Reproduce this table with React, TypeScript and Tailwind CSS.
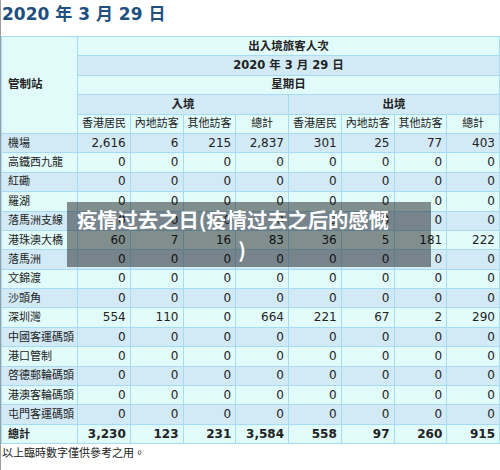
const cyan = "bg-[#e1fbfa]";
const blue = "bg-[#d2e9f6]";

type Row = { name: string; values: string[] };

const rows: Row[] = [
  { name: "機場", values: ["2,616", "6", "215", "2,837", "301", "25", "77", "403"] },
  { name: "高鐵西九龍", values: ["0", "0", "0", "0", "0", "0", "0", "0"] },
  { name: "紅磡", values: ["0", "0", "0", "0", "0", "0", "0", "0"] },
  { name: "羅湖", values: ["0", "0", "0", "0", "0", "0", "0", "0"] },
  { name: "落馬洲支線", values: ["0", "0", "0", "0", "0", "0", "0", "0"] },
  { name: "港珠澳大橋", values: ["60", "7", "16", "83", "36", "5", "181", "222"] },
  { name: "落馬洲", values: ["0", "0", "0", "0", "0", "0", "0", "0"] },
  { name: "文錦渡", values: ["0", "0", "0", "0", "0", "0", "0", "0"] },
  { name: "沙頭角", values: ["0", "0", "0", "0", "0", "0", "0", "0"] },
  { name: "深圳灣", values: ["554", "110", "0", "664", "221", "67", "2", "290"] },
  { name: "中國客運碼頭", values: ["0", "0", "0", "0", "0", "0", "0", "0"] },
  { name: "港口管制", values: ["0", "0", "0", "0", "0", "0", "0", "0"] },
  { name: "啓德郵輪碼頭", values: ["0", "0", "0", "0", "0", "0", "0", "0"] },
  { name: "港澳客輪碼頭", values: ["0", "0", "0", "0", "0", "0", "0", "0"] },
  { name: "屯門客運碼頭", values: ["0", "0", "0", "0", "0", "0", "0", "0"] },
];

const total = ["3,230", "123", "231", "3,584", "558", "97", "260", "915"];
const subHeads = ["香港居民", "內地訪客", "其他訪客", "總計", "香港居民", "內地訪客", "其他訪客", "總計"];

const cell = "border border-[#a5dbf4] px-[4px] py-0 align-middle";

export default function App() {
  return (
    <div className="relative w-[500px] h-[470px] bg-white border-l border-[#9e9e9e] font-['DejaVu_Sans','Noto_Sans_CJK_TC',sans-serif] text-[#222]">
      <div className="h-[36px] pt-[4px] pl-[1px] text-[17px] leading-[20px] font-bold text-[#1f4f7e]">
        2020 年 3 月 29 日
      </div>

      <table className="w-full table-fixed border-collapse text-[12px] leading-[15px]">
        <colgroup>
          <col className="w-[76px]" />
          <col /><col /><col /><col /><col /><col /><col /><col />
        </colgroup>
        <thead className="text-[11.5px]">
          <tr className="h-[19.4px]">
            <th rowSpan={5} className={`${cell} ${cyan} text-left pl-[6px] font-bold`}>管制站</th>
            <th colSpan={8} className={`${cell} ${cyan} font-bold text-center`}>出入境旅客人次</th>
          </tr>
          <tr className="h-[19.4px]">
            <th colSpan={8} className={`${cell} ${blue} font-bold text-center`}>2020 年 3 月 29 日</th>
          </tr>
          <tr className="h-[19.4px]">
            <th colSpan={8} className={`${cell} ${cyan} font-bold text-center`}>星期日</th>
          </tr>
          <tr className="h-[19.4px]">
            <th colSpan={4} className={`${cell} ${blue} font-bold text-center`}>入境</th>
            <th colSpan={4} className={`${cell} ${blue} font-bold text-center`}>出境</th>
          </tr>
          <tr className="h-[19.4px]">
            {subHeads.map((h, i) => (
              <th key={i} className={`${cell} ${cyan} font-normal text-center whitespace-nowrap px-0 text-[11px]`}>{h}</th>
            ))}
          </tr>
        </thead>
        <tbody>
          {rows.map((r, i) => {
            const bg = i % 2 === 0 ? blue : cyan;
            return (
              <tr key={r.name} className="h-[19.4px]">
                <td className={`${cell} ${bg} pl-[6px] whitespace-nowrap text-[11px]`}>{r.name}</td>
                {r.values.map((v, j) => (
                  <td key={j} className={`${cell} ${bg} text-right`}>{v}</td>
                ))}
              </tr>
            );
          })}
          <tr className="h-[19.4px]">
            <td className={`${cell} ${cyan} pl-[6px] font-bold text-[11px]`}>總計</td>
            {total.map((v, j) => (
              <td key={j} className={`${cell} ${cyan} text-right font-bold`}>{v}</td>
            ))}
          </tr>
        </tbody>
      </table>

      <p className="pl-[1px] pt-[2px] text-[11px] leading-[16px] text-[#222]">以上臨時數字僅供參考之用。</p>

      <div className="absolute left-[66px] top-[202px] w-[364px] h-[65px] bg-[rgba(0,0,0,0.43)] pl-[10px] pr-[24px] pt-[2px] text-white font-bold text-[20.3px] leading-[30px] font-['Noto_Sans_CJK_SC',sans-serif]">
        <div className="whitespace-nowrap">疫情过去之日(疫情过去之后的感慨</div>
        <div className="text-center">)</div>
      </div>
    </div>
  );
}
